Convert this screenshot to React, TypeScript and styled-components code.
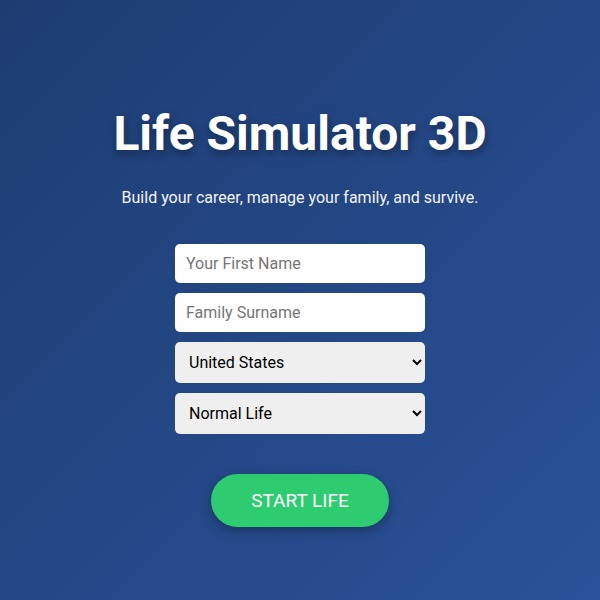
import React, {useState} from "react"
import styled, {createGlobalStyle} from "styled-components"

const GlobalStyle = createGlobalStyle`
  html, body {
    margin: 0;
    padding: 0;
  }
  body {
    font-family: Roboto, "Liberation Sans", sans-serif;
  }
`

const Screen = styled.div`
  width: 100%;
  min-height: 100vh;
  box-sizing: border-box;
  display: flex;
  flex-direction: column;
  align-items: center;
  padding-top: 106px;
  background: linear-gradient(135deg, #1e3c72 0%, #2a5298 100%);
  color: #fff;
`

const Title = styled.h1`
  margin: 0;
  font-size: 48px;
  font-weight: 700;
  line-height: 56px;
  text-shadow: 1px 4px 8px rgba(0, 0, 0, 0.35);
`

const Subtitle = styled.p`
  margin: 26px 0 0;
  font-size: 16px;
  line-height: 19px;
  color: #f2f4f8;
`

const Form = styled.div`
  width: 250px;
  margin-top: 37px;
  display: flex;
  flex-direction: column;
  gap: 10px;
`

const TextField = styled.input`
  height: 39px;
  box-sizing: border-box;
  padding: 0 11px;
  border: none;
  border-radius: 5px;
  background: #fff;
  font-family: Roboto, "Liberation Sans", sans-serif;
  font-size: 16px;
  color: #222;
  outline: none;

  &::placeholder {
    color: #757575;
  }
`

const Picker = styled.select`
  height: 41px;
  box-sizing: border-box;
  padding: 0 8px 0 10px;
  border: none;
  border-radius: 5px;
  background: #efefef;
  font-family: Roboto, "Liberation Sans", sans-serif;
  font-size: 16px;
  color: #000;
  outline: none;
`

const StartButton = styled.button`
  margin-top: 40px;
  padding: 16px 40px;
  border: none;
  border-radius: 30px;
  background: #2ecc71;
  color: #fff;
  font-family: Roboto, "Liberation Sans", sans-serif;
  font-size: 19px;
  line-height: 21px;
  cursor: pointer;
  box-shadow: 0 4px 12px rgba(0, 0, 0, 0.3);
`

const countries = ["United States", "United Kingdom", "Canada", "Australia", "Germany"]
const modes = ["Normal Life", "Hard Mode", "Rich Start"]

const App = () => {
    const [firstName, setFirstName] = useState("")
    const [surname, setSurname] = useState("")
    const [country, setCountry] = useState(countries[0])
    const [mode, setMode] = useState(modes[0])

    return (
        <>
            <GlobalStyle/>
            <Screen>
                <Title>Life Simulator 3D</Title>
                <Subtitle>Build your career, manage your family, and survive.</Subtitle>
                <Form>
                    <TextField placeholder="Your First Name" value={firstName} onChange={e => setFirstName(e.target.value)}/>
                    <TextField placeholder="Family Surname" value={surname} onChange={e => setSurname(e.target.value)}/>
                    <Picker value={country} onChange={e => setCountry(e.target.value)}>
                        {countries.map(c => <option key={c}>{c}</option>)}
                    </Picker>
                    <Picker value={mode} onChange={e => setMode(e.target.value)}>
                        {modes.map(m => <option key={m}>{m}</option>)}
                    </Picker>
                </Form>
                <StartButton>START LIFE</StartButton>
            </Screen>
        </>
    )
}

export default App
